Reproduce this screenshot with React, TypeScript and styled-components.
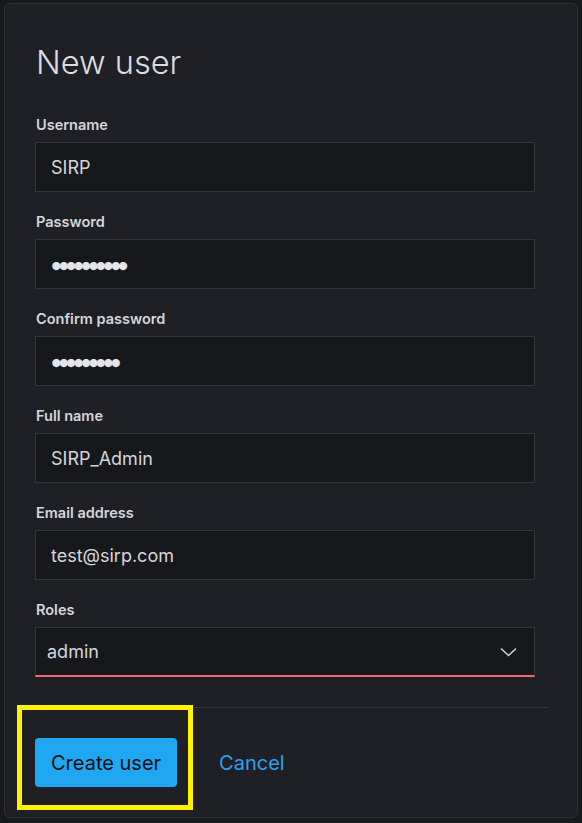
import React from "react";
import styled, { createGlobalStyle } from "styled-components";

const GlobalStyle = createGlobalStyle`
  html, body {
    margin: 0;
    padding: 0;
    background: #18191d;
  }
  body {
    font-family: Inter, "Noto Sans", sans-serif;
  }
`;

const Page = styled.div`
  padding: 3px 4px 5px 4px;
`;

const Card = styled.div`
  box-sizing: border-box;
  width: 574px;
  height: 815px;
  background: #1f2025;
  border: 1px solid #2f3036;
  border-radius: 6px;
  padding: 0 29px 0 30px;
  display: flex;
  flex-direction: column;
`;

const Title = styled.h1`
  margin: 35px 0 0 1px;
  font-size: 32.6px;
  line-height: 46px;
  font-weight: 300;
  color: #dcdde0;
`;

const Form = styled.div`
  margin-top: 31px;
  display: flex;
  flex-direction: column;
`;

const Field = styled.div`
  display: flex;
  flex-direction: column;
  margin-bottom: 21px;
  &:last-child {
    margin-bottom: 0;
  }
`;

const Label = styled.label`
  font-size: 14.5px;
  line-height: 17px;
  font-weight: 600;
  color: #d5d6dc;
  margin: 0 0 9px 1px;
`;

const Input = styled.input`
  box-sizing: border-box;
  width: 500px;
  height: 50px;
  padding: 0 15px;
  background: #17181c;
  border: 1px solid #34353b;
  border-radius: 0;
  color: #d5d6dc;
  font-family: Inter, "Noto Sans", sans-serif;
  font-size: 18px;
  outline: none;
  &[type="password"] {
    font-size: 26px;
    letter-spacing: -7.2px;
    padding-left: 13px;
    color: #e4e5e9;
  }
`;

const Select = styled.div`
  box-sizing: border-box;
  width: 500px;
  height: 50px;
  padding: 0 17px 0 11px;
  background: #17181c;
  border: 1px solid #34353b;
  border-bottom: 2px solid #f26a6d;
  display: flex;
  align-items: center;
  justify-content: space-between;
  color: #d5d6dc;
  font-size: 18px;
`;

const Divider = styled.hr`
  margin: 30px 0 0 0;
  border: none;
  border-top: 1px solid #34353b;
  width: 513px;
`;

const Actions = styled.div`
  display: flex;
  align-items: center;
  margin-top: 30px;
`;

const Highlight = styled.div`
  position: relative;
  &::after {
    content: "";
    position: absolute;
    left: -18px;
    top: -33px;
    right: -16px;
    bottom: -23px;
    border: 5px solid #fff200;
    pointer-events: none;
  }
`;

const PrimaryButton = styled.button`
  height: 49px;
  padding: 0 16px;
  background: #1fa7f2;
  color: #0d0e11;
  border: none;
  border-radius: 4px;
  font-family: Inter, "Noto Sans", sans-serif;
  font-size: 20px;
  font-weight: 400;
  cursor: pointer;
`;

const LinkButton = styled.button`
  margin-left: 26px;
  height: 49px;
  padding: 0 16px;
  background: none;
  border: none;
  color: #2aa0f0;
  font-family: Inter, "Noto Sans", sans-serif;
  font-size: 20px;
  cursor: pointer;
`;

const Chevron = () => (
  <svg width="17" height="10" viewBox="0 0 17 10" fill="none">
    <path d="M1 1.5 L8.5 8.5 L16 1.5" stroke="#d5d6dc" strokeWidth="1.4" />
  </svg>
);

const fields = [
  { label: "Username", value: "SIRP", type: "text" },
  { label: "Password", value: "xxxxxxxxxx", type: "password" },
  { label: "Confirm password", value: "xxxxxxxxx", type: "password" },
  { label: "Full name", value: "SIRP_Admin", type: "text" },
  { label: "Email address", value: "test@sirp.com", type: "text" },
];

export default function App() {
  return (
    <Page>
      <GlobalStyle />
      <Card>
        <Title>New user</Title>
        <Form>
          {fields.map((f) => (
            <Field key={f.label}>
              <Label>{f.label}</Label>
              <Input type={f.type} defaultValue={f.value} readOnly />
            </Field>
          ))}
          <Field>
            <Label>Roles</Label>
            <Select>
              <span>admin</span>
              <Chevron />
            </Select>
          </Field>
        </Form>
        <Divider />
        <Actions>
          <Highlight>
            <PrimaryButton>Create user</PrimaryButton>
          </Highlight>
          <LinkButton>Cancel</LinkButton>
        </Actions>
      </Card>
    </Page>
  );
}
